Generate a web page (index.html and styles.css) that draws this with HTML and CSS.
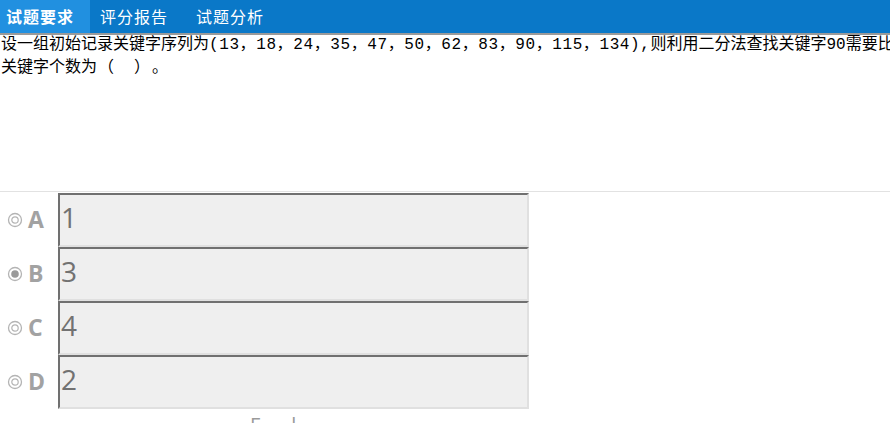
FILE: index.html
```html
<!DOCTYPE html>
<html lang="zh">
<head>
<meta charset="utf-8">
<link rel="stylesheet" href="styles.css">
</head>
<body>
<div class="tabs">
  <div class="tab active">试题要求</div>
  <div class="tab">评分报告</div>
  <div class="tab">试题分析</div>
</div>
<div class="question">
  <div class="line">设一组初始记录关键字序列为<span class="nums">(13，18，24，35，47，50，62，83，90，115，134),</span>则利用二分法查找关键字90需要比较的</div>
  <div class="line">关键字个数为<span class="p">（</span><span class="gap"></span><span class="p">）</span><span class="p">。</span></div>
</div>
<div class="options">
  <div class="option">
    <svg class="radio" width="16" height="16" viewBox="0 0 16 16"><circle cx="8" cy="8" r="6.5" fill="none" stroke="#b4b4b4" stroke-width="1.3"/><circle cx="8" cy="8" r="3.2" fill="none" stroke="#b4b4b4" stroke-width="1.2"/></svg>
    <span class="letter">A</span>
    <div class="box">1</div>
  </div>
  <div class="option">
    <svg class="radio" width="16" height="16" viewBox="0 0 16 16"><circle cx="8" cy="8" r="6.5" fill="none" stroke="#b4b4b4" stroke-width="1.3"/><circle cx="8" cy="8" r="3.8" fill="#9a9a9a"/></svg>
    <span class="letter">B</span>
    <div class="box">3</div>
  </div>
  <div class="option">
    <svg class="radio" width="16" height="16" viewBox="0 0 16 16"><circle cx="8" cy="8" r="6.5" fill="none" stroke="#b4b4b4" stroke-width="1.3"/><circle cx="8" cy="8" r="3.2" fill="none" stroke="#b4b4b4" stroke-width="1.2"/></svg>
    <span class="letter">C</span>
    <div class="box">4</div>
  </div>
  <div class="option">
    <svg class="radio" width="16" height="16" viewBox="0 0 16 16"><circle cx="8" cy="8" r="6.5" fill="none" stroke="#b4b4b4" stroke-width="1.3"/><circle cx="8" cy="8" r="3.2" fill="none" stroke="#b4b4b4" stroke-width="1.2"/></svg>
    <span class="letter">D</span>
    <div class="box">2</div>
  </div>
</div>
<div class="footer"><span class="f1">F</span><span class="f2">l</span></div>
</body>
</html>
```
FILE: styles.css
```css
html, body {
  margin: 0;
  padding: 0;
  background: #ffffff;
  overflow: hidden;
}
body {
  width: 890px;
  height: 423px;
  font-family: "Noto Sans CJK SC", sans-serif;
}
.tabs {
  display: flex;
  height: 33px;
  background: #0a78c8;
  border-bottom: 2px solid #9a9a9a;
}
.tab {
  color: #ffffff;
  font-size: 16px;
  letter-spacing: 1px;
  line-height: 33px;
  padding: 0 18px 0 10px;
  white-space: nowrap;
}
.tab.active {
  background: #2190e0;
  font-weight: bold;
  padding: 0 16px 0 6px;
}
.question {
  height: 156px;
  border-bottom: 1px solid #e2e2e2;
  font-family: "Liberation Mono", "Noto Sans CJK SC", monospace;
  font-size: 16px;
  line-height: 20px;
  color: #000;
  padding-left: 1px;
  overflow: hidden;
}
.line {
  white-space: nowrap;
  overflow: hidden;
}
.nums {
  letter-spacing: 0.6px;
}
.p {
  display: inline-block;
  width: 18px;
  text-align: center;
  font-family: "Noto Sans CJK SC", sans-serif;
}
.gap {
  display: inline-block;
  width: 18px;
}
.options {
  padding-top: 1px;
}
.option {
  display: flex;
  align-items: center;
  height: 54px;
}
.radio {
  margin-left: 7px;
  flex: none;
}
.letter {
  width: 35px;
  padding-left: 5px;
  box-sizing: border-box;
  font-family: "Open Sans", sans-serif;
  font-weight: bold;
  font-size: 23px;
  color: #a2a2a2;
  margin-top: -3px;
}
.box {
  align-self: stretch;
  width: 466px;
  background: #efefef;
  border-top: 2px solid #707070;
  border-left: 2px solid #707070;
  border-right: 2px solid #e0e0e0;
  border-bottom: 2px solid #e0e0e0;
  font-family: "Open Sans", sans-serif;
  font-size: 28px;
  line-height: 45px;
  color: #727272;
  padding-left: 1px;
}
.footer {
  padding: 4px 0 0 250px;
  font-family: "Open Sans", sans-serif;
  font-size: 20px;
  line-height: 24px;
  color: #9a9a9a;
}
.f2 {
  margin-left: 31px;
}
```
